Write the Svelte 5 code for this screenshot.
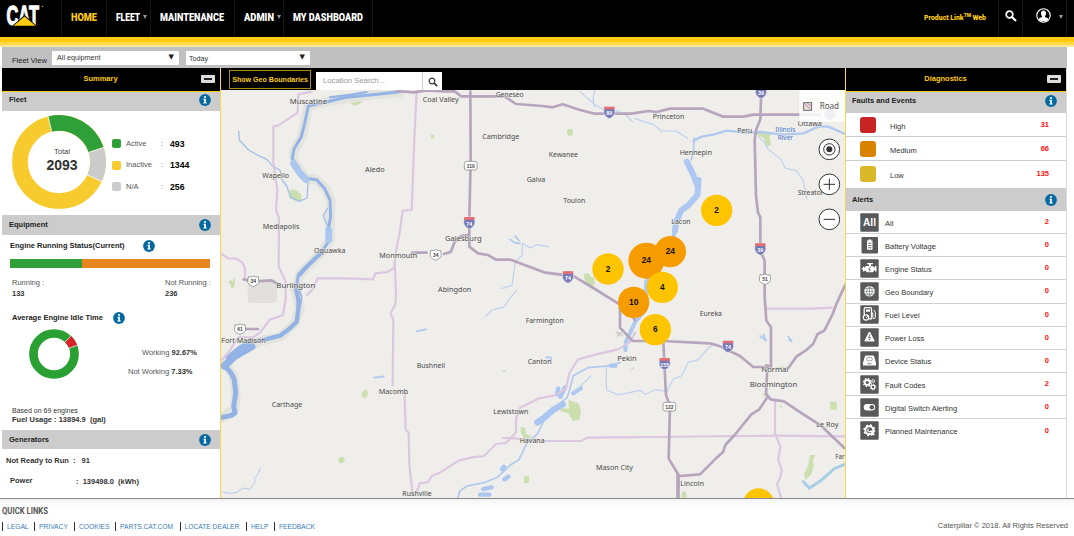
<script>
  const nav = [
    { t: 'HOME', w: 26, cell: 45, on: true },
    { t: 'FLEET', w: 24, cell: 44, menu: true },
    { t: 'MAINTENANCE', w: 64, cell: 83.5 },
    { t: 'ADMIN', w: 30, cell: 49.5, menu: true },
    { t: 'MY DASHBOARD', w: 70, cell: 90 }
  ];
  const fleet = [
    ['Active', '493', '#2f9f38'],
    ['Inactive', '1344', '#f7cb2d'],
    ['N/A', '256', '#cbcbcb']
  ];
  const faults = [
    ['High', '31', '#c92424'],
    ['Medium', '66', '#d98200'],
    ['Low', '135', '#dab726']
  ];
  const alerts = [
    ['All', '2', 'all'],
    ['Battery Voltage', '0', 'battery'],
    ['Engine Status', '0', 'engine'],
    ['Geo Boundary', '0', 'globe'],
    ['Fuel Level', '0', 'fuel'],
    ['Power Loss', '0', 'power'],
    ['Device Status', '0', 'device'],
    ['Fault Codes', '2', 'gears'],
    ['Digital Switch Alerting', '0', 'switch'],
    ['Planned Maintenance', '0', 'gear']
  ];
  const links = [
    ['LEGAL', 32], ['PRIVACY', 40], ['COOKIES', 41], ['PARTS.CAT.COM', 64.5],
    ['LOCATE DEALER', 66.5], ['HELP', 28], ['FEEDBACK', 50]
  ];
  // name, x, width, baseline in sheet units (three per pixel)
  const places = [
    ['Muscatine', 869, 112, 312], ['Coal Valley', 1268, 108, 305], ['Wapello', 787, 80, 534],
    ['Aledo', 1095, 59, 515], ['Mediapolis', 788, 110, 687], ['Oquawka', 942, 94, 759],
    ['Monmouth', 1138, 114, 773], ['Burlington', 829, 117, 863], ['Fort Madison', 664, 133, 1028],
    ['Carthage', 815, 92, 1220], ['Macomb', 1136, 89, 1182], ['Rushville', 1207, 88, 1489],
    ['Bushnell', 1250, 85, 1103], ['Geneseo', 1487, 84, 290], ['Cambridge', 1447, 111, 418],
    ['Kewanee', 1646, 88, 470], ['Galva', 1580, 56, 545], ['Toulon', 1690, 66, 608],
    ['Galesburg', 1335, 110, 722], ['Abingdon', 1314, 100, 875], ['Farmington', 1577, 114, 969],
    ['Canton', 1583, 72, 1093], ['Pekin', 1852, 58, 1084], ['Lewistown', 1480, 105, 1243],
    ['Havana', 1559, 75, 1328], ['Mason City', 1788, 111, 1411], ['Princeton', 1958, 95, 357],
    ['Peru', 2212, 45, 398], ['Ottawa', 2393, 72, 379], ['Hennepin', 2039, 97, 466],
    ['Streator', 2393, 78, 586], ['Lacon', 2014, 58, 672], ['Eureka', 2099, 67, 947],
    ['Normal', 2284, 81, 1116], ['Bloomington', 2249, 143, 1160], ['Le Roy', 2449, 66, 1280],
    ['Far', 2506, 28, 1377], ['Lincoln', 2041, 71, 1457]
  ];
  const interstates = [
    ['80', 1828, 337], ['74', 1408, 668], ['74', 1704, 831], ['39', 2283, 277],
    ['39', 2281, 747], ['74', 2184, 1039], ['155', 1994, 1091]
  ];
  const shields = [
    ['34', 760, 843, 34], ['61', 720, 987, 32], ['34', 1307, 764, 32], ['51', 2295, 837, 32],
    ['110', 1412, 497, 38], ['122', 2008, 1220, 38]
  ];
  const clusters = [
    ['2', 2150, 631, 47, '#ffc400'], ['24', 2011, 755, 47, '#f69b00'], ['24', 1939, 782, 54, '#f69b00'],
    ['2', 1824, 807, 47, '#ffc400'], ['4', 1987, 862, 47, '#ffc400'], ['10', 1901, 907, 47, '#f69b00'],
    ['6', 1966, 989, 47, '#ffc400'], ['', 2276, 1512, 47, '#ffc400']
  ];
</script>

{#snippet info()}
  <svg class="info" width="12" height="12" viewBox="0 0 12 12"><circle cx="6" cy="6" r="5.9" fill="#04699f" /><circle cx="6" cy="3" r="1.1" fill="#fff" /><path d="M4.4 4.8h2.5v3.7h.9v1H4.3v-1h.9V5.7h-.8z" fill="#fff" /></svg>
{/snippet}

{#snippet icon(k)}
  <svg class="icon" width="19" height="19" viewBox="0 0 19 19">
    <rect x={k === 'battery' ? 1.5 : 0.3} y={k === 'battery' ? 1 : 0.3} width={k === 'battery' ? 16.5 : 18.4} height={k === 'battery' ? 16.5 : 18.4} rx="1" fill="#58595b" />
    {#if k === 'all'}
      <text x="3" y="12.6" font-size="10.5" font-weight="bold" fill="#fff" textLength="13" lengthAdjust="spacingAndGlyphs">All</text>
    {:else if k === 'battery'}
      <path d="M8.5 3.6h2.6v1h1.4v9.2H7V4.600h1.500z" fill="#fff" /><path d="M8 7.200h3.500M8 9.500h3.500M8 11.800h3.500" stroke="#58595b" stroke-width=".8" />
    {:else if k === 'engine'}
      <path d="M7 4h6v1.300h-2V7h2l1 1.300h1V7h1.500v5.500H15v-1.300h-.8L13 13.200H7L5.500 11.800H4.200v.7H3v-2H1.800V9H3V7.700h1.200V9L6 7h3V5.300H7z" fill="#fff" /><path d="M10.500 7.500l-1.700 2.700h1.300l-.6 2.200" fill="none" stroke="#58595b" stroke-width=".8" />
    {:else if k === 'globe'}
      <circle cx="9.500" cy="9.300" r="5.300" fill="#fff" /><path d="M9.500 4v10.600M4.200 9.300h10.600M5.200 6.500h8.600M5.200 12.100h8.600M9.500 4c-3.700 3-3.700 7.600 0 10.600M9.500 4c3.700 3 3.700 7.600 0 10.600" fill="none" stroke="#77787a" stroke-width=".65" />
    {:else if k === 'fuel'}
      <path d="M4.200 10V4c0-1 .5-1.300 1.300-1.300h4.800c.8 0 1.200.5 1.200 1.300v9.800H9" fill="none" stroke="#fff" stroke-width="1.300" /><rect x="6" y="4.500" width="4" height="2.200" fill="#fff" /><path d="M11.800 8h1v4.500c0 1.500 2.500 1.500 2.500 0V7.200L13.700 4.800" fill="none" stroke="#fff" stroke-width="1" /><circle cx="6" cy="12.500" r="2.700" fill="#58595b" stroke="#fff" stroke-width="1.200" /><path d="M6 13l2-2" stroke="#fff" />
    {:else if k === 'power'}
      <path d="M9.500 3.900l4.700 9.100H4.800z" fill="#fff" stroke="#fff" stroke-linejoin="round" /><path d="M10.100 6.500L8.600 9.500h1.700l-.9 2.800" fill="none" stroke="#58595b" stroke-width=".9" />
    {:else if k === 'device'}
      <path d="M5.500 5h8l1.900 6.500H3.600z" fill="#fff" stroke="#fff" stroke-linejoin="round" /><rect x="3" y="11" width="13" height="3.500" fill="#fff" /><rect x="6.800" y="6.500" width="5.400" height="3.400" rx="1.500" fill="none" stroke="#77787a" stroke-width=".7" /><path d="M7.500 12.700h4" stroke="#58595b" stroke-width=".8" />
    {:else if k === 'gears'}
      <circle cx="7.300" cy="7.500" r="2.500" fill="none" stroke="#fff" stroke-width="1.900" /><circle cx="7.300" cy="7.500" r="3.900" fill="none" stroke="#fff" stroke-width="1.300" stroke-dasharray="1.500 1.560" /><circle cx="13" cy="12" r="1.900" fill="none" stroke="#fff" stroke-width="1.300" /><circle cx="13" cy="12" r="2.900" fill="none" stroke="#fff" stroke-dasharray="1.100 1.170" /><circle cx="13.200" cy="6" r="1.300" fill="none" stroke="#fff" stroke-width="1.200" stroke-dasharray="1 .5" />
    {:else if k === 'switch'}
      <rect x="3.700" y="6" width="11.500" height="6.400" rx="3.200" fill="#fff" /><circle cx="11.900" cy="9.200" r="2.200" fill="#58595b" />
    {:else}
      <circle cx="9.300" cy="9.300" r="4" fill="none" stroke="#fff" stroke-width="2" /><circle cx="9.300" cy="9.300" r="5.300" fill="none" stroke="#fff" stroke-width="1.400" stroke-dasharray="2.100 2.060" /><path d="M8.500 7.700a1.700 1.700 0 1 0 2.400 2.200L14.500 14" fill="none" stroke="#fff" stroke-width="1.200" />
    {/if}
  </svg>
{/snippet}

<div class="page">
  <header>
    <div class="logo">
      <svg width="42" height="30" viewBox="0 0 42 30">
        <text x=".5" y="22" font-size="28.500" font-weight="bold" fill="#fff" stroke="#fff" stroke-width="1.300" textLength="32.500" lengthAdjust="spacingAndGlyphs">CAT</text>
        <path d="M5 24L18.500 12L32 24z" fill="#000" /><path d="M7.500 22.700L18.500 13.600L29.500 22.700z" fill="#fecb12" />
        <circle cx="36.500" cy="3.500" r=".8" fill="#999" />
      </svg>
    </div>
    <nav>
      {#each nav as n}
        <div class="tab" style:width="{n.cell}px">
          <svg width={n.w} height="14" viewBox="0 0 {n.w} 14"><text y="11" font-family="Roboto" font-size="11" font-weight="900" fill={n.on ? '#fecb12' : '#fff'} textLength={n.w} lengthAdjust="spacingAndGlyphs">{n.t}</text></svg>
          {#if n.menu}<i class="caret"></i>{/if}
        </div>
      {/each}
    </nav>
    <div class="product">
      <svg width="62" height="14" viewBox="0 0 62 14"><text y="9.500" font-family="Roboto" font-weight="900" fill="#fecb12" font-size="7.700" textLength="62" lengthAdjust="spacingAndGlyphs">Product Link<tspan dy="-3" font-size="5.500">TM</tspan><tspan dx="1.500" dy="3">Web</tspan></text></svg>
    </div>
    <div class="tool search"><svg width="12" height="12" viewBox="0 0 12 12"><circle cx="4.500" cy="4.500" r="3.300" fill="none" stroke="#fff" stroke-width="1.700" /><path d="M7 7l4 4" stroke="#fff" stroke-width="2.100" /></svg></div>
    <div class="tool user">
      <svg width="15" height="15" viewBox="0 0 15 15"><circle cx="7.500" cy="7.500" r="6.700" fill="none" stroke="#fff" stroke-width="1.100" /><path d="M7.500 2.400c2 0 2.700 1.500 2.500 3.300-.1 1.200-.6 1.900-1 2.400v.8l3 1.300v1.500c-2.500 2-6.500 2-9 0v-1.500l3-1.300v-.8c-.4-.5-.9-1.200-1-2.400-.2-1.800.500-3.300 2.500-3.300z" fill="#fff" /></svg>
      <i class="caret"></i>
    </div>
  </header>
  <div class="stripe"></div>

  <div class="filters">
    <span>Fleet View</span>
    <div class="select a">All equipment<b>▼</b></div>
    <div class="select b">Today<b>▼</b></div>
  </div>

  <main>
    <aside class="left">
      <div class="title"><span>Summary</span><i class="min"></i></div>
      <h3 class="h-fleet">Fleet{@render info()}</h3>
      <div class="fleet">
        <svg width="94" height="94" viewBox="-47 -47 94 94">
          <g fill="none" stroke-width="15.700">
            <circle r="39" stroke="#f7cb2d" />
            <path d="M-9.100 -37.920A39 39 0 0 1 37.100 -12.050" stroke="#2f9f38" />
            <path d="M37.100 -12.050A39 39 0 0 1 35.500 16.150" stroke="#cbcbcb" />
          </g>
          <path d="M-7.300 -30.300L-11 -45.900M29.500 -9.600L44.900 -14.600M28.200 12.800L43 19.600" stroke="#fff" stroke-width=".8" />
          <text y="-8" font-size="7.500" text-anchor="middle" fill="#444" x="3">Total</text>
          <text y="8" x="3" font-size="14" font-weight="bold" text-anchor="middle" fill="#333">2093</text>
        </svg>
        <ul>
          {#each fleet as [n, v, c]}
            <li><i style:background={c}></i><span>{n}</span><em>:</em><b>{v}</b></li>
          {/each}
        </ul>
      </div>
      <h3 class="h-eq">Equipment{@render info()}</h3>
      <div class="equipment">
        <div class="sub">Engine Running Status(Current){@render info()}</div>
        <div class="bar"><i></i></div>
        <div class="pair"><div>Running :<b>133</b></div><div>Not Running :<b>236</b></div></div>
        <div class="sub idle">Average Engine Idle Time{@render info()}</div>
        <div class="work">
          <svg width="50" height="50" viewBox="-25 -25 50 50"><circle r="20.500" fill="none" stroke="#2a9f32" stroke-width="8.700" /><path d="M14 -15A20.500 20.500 0 0 1 19.200 -7.200" fill="none" stroke="#d8232a" stroke-width="8.700" /><path d="M11 -11.900L17.200 -18.500M14.600 -5.600L24 -9" stroke="#fff" stroke-width=".7" /></svg>
          <div><p>Working <b>92.67%</b></p><p>Not Working <b>7.33%</b></p></div>
        </div>
        <div class="usage">Based on 69 engines<b>Fuel Usage&nbsp;: 13894.9 &nbsp;(gal)</b></div>
      </div>
      <h3 class="h-gen">Generators{@render info()}</h3>
      <div class="gen"><p>Not Ready to Run &nbsp;:<b>91</b></p><p class="pow"><span>Power</span><b>: &nbsp;139498.0 &nbsp;(kWh)</b></p></div>
    </aside>

    <section class="center">
      <div class="mapbar"><button>Show Geo Boundaries</button><div class="loc">Location Search...<span><svg width="10" height="10" viewBox="0 0 10 10"><circle cx="4" cy="4" r="2.800" fill="none" stroke="#333" stroke-width="1.200" /><path d="M6 6l3.200 3.200" stroke="#333" stroke-width="1.700" /></svg></span></div></div>
      <svg class="map" width="624" height="408" viewBox="663 270 1872 1224">
        <rect x="663" y="270" width="1872" height="1224" fill="#efeeea" />
        <rect x="743" y="845" width="88" height="64" rx="12" fill="#e1e0dd" />
        <g fill="#cbdfae">
          <path d="M1051 295h30l6 12-20 10-14-6zM868 470l18 6 8 20 -4 18-16-18zM868 573l14-6 20 14 4 18-16 5-22-10zM970 561l18 4 2 14-12 2zM683 845l12-5 4 6 5-16 2 12-4 20-8 5 -3-14z" />
          <path d="M1292 405h10v10h-8zM1704 387h14v18l-12 4-6-10zM1087 1175l12-7 6 14-8 12-12-3zM1015 1374l14-4 6 10-8 10-10-2zM1750 824l14-6 8 12 12 4v20l-16 8-10-12zM1705 1200l30 10 8 22-4 26-20 6-14-24-24-6 4-10 22 2zM1562 1280l14 4 2 18 16 6-10 12-14-8-8-16zM1573 1429h14v20h-16zM1508 1110h8v6h-8zM1896 1104l8-4-4 8h-10z" />
          <path d="M2271 395h44l-6 16 4 24-14 4-8-26-20-8zM2490 1205h20v24h-18zM2430 1365h16l-8 20 4 10-8 28-18 16-4-18 12-22zM1956 867h6v8h-6zM2330 1100h24v8h-24zM2045 1478l12-6 4 22h-16zM2286 1180l10 2-2 10zM2338 1212l10 12-8-2z" />
        </g>
        <g fill="none" stroke-linejoin="round" stroke-linecap="round">
          <path d="M1200 278L1132 283 990 303 925 318 914 370 906 410 880 455 886 495 917 535 950 539 980 570 993 605 990 660 990 720 960 762 900 823 886 870 900 925 884 970 840 1011 790 1021 730 1046 673 1090 700 1125 708 1180 704 1225 663 1255" stroke="#e4e4df" stroke-width="29" />
          <g stroke="#93b3e6">
            <path d="M1200 275L1132 283 1040 292 990 303 925 318 914 370 904 410 882 447 877 475 890 500 917 535 950 539 974 566 990 600 992 650 986 680 989 720 960 762 925 795 894 830 888 870" stroke-width="9" />
            <path d="M1100 276l-50 8-60 8" stroke-width="6" />
            <path d="M881 490l20 31 18 18M986 690v30" stroke="#a9c7ef" stroke-width="20" />
            <path d="M960 762l-35 33-28 30" stroke-width="13" />
            <path d="M888 865l8 40-2 30-4 30-20 20-30 22-46 12-50 8-30 20-30 26" stroke-width="13" />
            <path d="M755 1040l-52 30-30 28" stroke-width="22" />
            <path d="M673 1095l20 24 10 20 4 40-6 40 4 20-12 8-32 6" stroke-width="15" />
            <path d="M895 860l10 30-6 40" stroke-width="5" />
            <path d="M924 550l-3 44-23 10-26-12-12-34-15-20-5-28-20-10-20-22-30-14-24-14-28-30-2-26M982 625l-12 22 16 40" stroke-width="4" stroke="#a3bfe9" />
            <path d="M668 1476l20 4 20-2 20-14 22 4 16-24-4-6 14-20 5-14" stroke="#b3cbee" stroke-width="3" />
          </g>
          <g stroke="#b0c9f0">
            <path d="M1122 1133l30-4M1250 994l28-6M1530 718l14 10 16 2M1545 708l12 14M2280 1008l18 14 -8-18M2365 1010l10 14-8-4M1638 1072h14l2 8" stroke-width="5" />
            <path d="M2535 402l-50-22-30 0-45 20-60 4-70-8-40 2-60-6-40 12-35 6-25 12" stroke-width="7" />
            <path d="M2083 415l-3 40-6 25" stroke-width="5" />
            <path d="M2060 485l18 36 16 40M2096 540l-4 45-26 30-22 16-16 36-3 26" stroke-width="18" stroke="#adc8f2" stroke-dasharray="60 2" />
            <path d="M2025 690l-14 65-32 30-40 60-3 85-30 35-28 60-2 25" stroke-width="12" />
            <path d="M1860 1088l-36 10-60 5-44 24-8 30-10 35-60 50-30 60-30 25-25 52-25 15-40 38-40 16-50 10-22 14-8 28" stroke-width="5" />
            <path d="M1688 1213l-30 18-28 24-18 12" stroke-width="19" stroke="#abc6f1" />
            <path d="M1675 1165l-4 18M1695 1162l-14 28M1720 1180l22-15M1832 1097h14M1506 1408l6-8M1525 1430l-12 8M1450 1467l25-5M1440 1484h28" stroke-width="13" stroke="#abc6f1" />
            <path d="M1905 355l26 10 30 8 22 20 45 0 35 22M2275 410l18 16 10 20 40 32 12 26 34 8 20 28 6 30 5 26M1905 1174l15-3 16 12 30-14 34 6 20-38 25-10 20-40 30-8 30-35 20-14M1820 1095l-2 40 2 35 34 14 24-4 27-6M1645 740l-35-6-20 10-22-14-2 36-20 20-10 70-32 10M1456 950l20-20 34-8 24-32 16-20M1740 275l46 40 28 15 34 2 28 10 22 24M1784 270l-5 26 4 24M1722 1178l50-50" stroke-width="3.500" stroke="#bdd1ee" />
            <path d="M2410 1445l18 20 38-26 38-34 31-12" stroke="#a9cfe6" stroke-width="9" />
          </g>
          <g stroke="#dcc7e0" stroke-width="6.500">
            <path d="M935 275l-40 8-2 55-58 38-15 4v110l12 80-4 60 9 25-1 145 21 45v50l-8 50-40 14-28 38-22 15h-44l-30 46-24 25M663 761l22 14 24 1 18 12 8 17 0 27M1250 275l-6 120-9 235-27 2-8 60-12 60-6 52-20 12-36 4-7 18-60-2-40-1-66 0-14 32-18 18" />
            <path d="M1184 785l4 100-2 27-14 28 8 20-2 196M1213 1170l4 120 9 8 2 95 10 90M1246 1485l14-35 24-4 12-18 20-8 60-38 40-10 36-4 36-36 30-3 30-32v-42l12-32 58-28 50-10 30-20 10-45 26-42 52-14 68-16 34-20 18-30" />
            <path d="M1508 1314l36 1 50 8h150l18-10 190-2 370-4 220 2M2296 926h140l60-3M2325 1200v100l16 40-6 40 10 30-4 22-10 20 12 42" />
          </g>
          <g stroke="#b6a5bd" stroke-width="8">
            <path d="M1190 273l50 4 40-6 50 3 34 0 20 15h130l34 23 80 6 30 4 30-9 50 16 46 12h110l51-8 25 3 40-10h100l60 24h60l30-6h200M1411 275l1 200-4 185v80l26 20 30 5 24 14h44l100 38 90 12 58 35 80 50 30 20M1860 923v60l38 40h90l142 7 30 9 60 29 40 33h46M1408 704l-24 4-20 18-12 30-20 6M1236 758h44M731 838l32 6 52-3 20 12M716 987h58" />
            <path d="M1860 925l35 22 10 14M2284 270l-3 88-12 30-5 30 4 170 6 50 7 14v100l13 30v110l5 70 14 20v118l-14-4M2302 1102l-4 80 14 16 40 6 50 34 60 38 71 68M2302 1192l-24 36-24 15-50 62-28 30-6 20-20 18-50 50-60 5-5-1v30M2365 1104l24-34 30-20 20-18 14-30 20-10 25-50 12-32 25-54M1990 1026l8 160 12 30-4 160 28 46" />
            <path d="M2034 1424v70" stroke-width="11" />
          </g>
        </g>
        <path d="M1844 990l14 8 10-6-4 10 8 8-14-4-6 8v-12z" fill="#cfccc6" />
        <g font-family="Noto Sans" font-size="23.500" fill="#4a4a4a" stroke="#efeeea" stroke-width="3" stroke-linejoin="round" paint-order="stroke">
          {#each places as [n, x, w, y]}
            <text {x} {y} textLength={w} lengthAdjust="spacingAndGlyphs">{n}</text>
          {/each}
          <g fill="#4574cd" font-size="20">
            <text x="2326" y="397" textLength="60" lengthAdjust="spacingAndGlyphs">Illinois</text>
            <text x="2333" y="421" textLength="46" lengthAdjust="spacingAndGlyphs">River</text>
          </g>
        </g>
        {#each interstates as [n, x, y]}
          <g transform="translate({x} {y})" font-size="16" font-weight="bold" text-anchor="middle">
            <path d="M-15-17H15L17 0Q15 13 0 19Q-15 13-17 0Z" fill="#7579b7" stroke="#efeeea" stroke-width="2" /><path d="M-15-17H15L16-9H-16Z" fill="#e86e71" /><text y="9" fill="#fff">{n}</text>
          </g>
        {/each}
        {#each shields as [n, x, y, w]}
          <g transform="translate({x} {y})" font-size="15" font-weight="bold" text-anchor="middle">
            {#if w > 35}<rect x={-w / 2} y="-13" width={w} height="26" rx="6" fill="#fff" stroke="#777" stroke-width="2" />
            {:else}<path d="M-15-13Q-8-10 0-15Q8-10 15-13L17 4Q15 11 0 17Q-15 11-17 4Z" fill="#fff" stroke="#777" stroke-width="2" />{/if}
            <text y="6" fill="#444">{n}</text>
          </g>
        {/each}
        {#each clusters as [n, x, y, r, c]}
          <circle cx={x} cy={y} {r} fill={c} />{#if n}<text {x} y={y + 8} font-size="25" font-weight="bold" text-anchor="middle" fill="#111">{n}</text>{/if}
        {/each}
        <rect x="2398" y="270" width="137" height="96" fill="#fff" opacity=".82" />
        <rect x="2411" y="308" width="24" height="23" fill="#e9dfd3" stroke="#555" stroke-width="2.500" /><path d="M2413 310l20 19M2422 310l11 7" stroke="#bd82c0" stroke-width="3" />
        <text x="2459" y="328" font-family="Noto Sans" font-size="26" fill="#555" textLength="58" lengthAdjust="spacingAndGlyphs">Road</text>
        <circle cx="2490" cy="343" r="16" fill="#e9e6f3" opacity=".6" />
        <g fill="#fff" stroke="#333" stroke-width="3"><circle cx="2488" cy="448" r="31" /><circle cx="2488" cy="553" r="31" /><circle cx="2488" cy="658" r="31" /><circle cx="2488" cy="448" r="17" /><path d="M2471 553h34M2488 536v34M2471 658h34" /></g>
        <circle cx="2488" cy="448" r="9" fill="#333" />
      </svg>
    </section>

    <aside class="right">
      <div class="title"><span>Diagnostics</span><i class="min"></i></div>
      <h3 class="h-faults">Faults and Events{@render info()}</h3>
      {#each faults as [n, v, c]}
        <div class="fault"><i style:background={c}></i><span>{n}</span><b>{v}</b></div>
      {/each}
      <h3 class="h-alerts">Alerts{@render info()}</h3>
      {#each alerts as [n, v, k]}
        <div class="alert">{@render icon(k)}<span>{n}</span><b>{v}</b></div>
      {/each}
    </aside>
  </main>

  <footer>
    <svg width="60" height="12" viewBox="0 0 60 12"><text y="9.500" font-family="Roboto" font-size="9.500" font-weight="bold" fill="#555" textLength="46" lengthAdjust="spacingAndGlyphs">QUICK LINKS</text></svg>
    <div class="foot">
      <div class="links">{#each links as [n, w]}<a href="#top" style:width="{w}px">{n}</a>{/each}</div>
      <span>Caterpillar © 2018. All Rights Reserved</span>
    </div>
  </footer>
</div>

<style>
  :global(body) { margin: 0; background: #fff; }
  .page { width: 1074px; height: 536px; overflow: hidden; font: 7.5px/10px "Liberation Sans", Arial, sans-serif; color: #333; box-sizing: border-box; }
  .page * { box-sizing: border-box; }
  p, ul, h3 { margin: 0; padding: 0; }
  svg { display: block; flex: none; overflow: visible; }
  .map { overflow: hidden; }
  header { height: 37px; background: #000; display: flex; padding-right: 7px; }
  .logo { width: 61px; padding: 3px 0 0 6px; }
  nav { display: flex; flex: 1; }
  .tab { height: 37px; border-left: 1px solid #161616; padding: 10px 0 0 9px; display: flex; gap: 3px; }
  .tab:last-child { border-right: 1px solid #161616; }
  .caret { width: 0; height: 0; border: 2px solid transparent; border-top: 4px solid #999; border-bottom: 0; margin-top: 5px; }
  .product { width: 74px; padding-top: 10px; }
  .tool { border-left: 1px solid #191919; height: 37px; display: flex; }
  .search { width: 24px; padding: 10px 0 0 6px; }
  .user { width: 45px; padding: 8px 0 0 13px; gap: 8px; border-right: 1px solid #191919; }
  .user .caret { margin-top: 7px; }
  .stripe { height: 10px; background: linear-gradient(#fecb12 0 5px, #ffd747 5px 8px, #ffe798 8px); }
  .filters { margin: 0 7px 0 2px; height: 21px; background: #c0c0c0; display: flex; align-items: flex-start; padding: 4px 0 0 10px; }
  .filters > span { width: 40px; padding-top: 5px; white-space: nowrap; color: #222; }
  .select { background: #fff; height: 14px; font-size: 7.200px; line-height: 13px; display: flex; justify-content: space-between; padding: 0 5px; }
  .select b { font-size: 7px; color: #222; font-family: "DejaVu Sans", sans-serif; }
  .a { width: 127px; }
  .b { width: 124px; margin-left: 7px; padding-left: 3px; line-height: 15px; }
  .b b { line-height: 13px; }
  main { margin: 0 7px 0 2px; height: 430px; display: grid; grid-template-columns: 219px 624px 222px; overflow: hidden; }
  .left { border-right: 1px solid #fbd54d; }
  .right { border-left: 1px solid #fbd54d; border-right: 1px solid #ddd; }
  .title { height: 23.500px; background: #000; color: #fecb12; font-weight: bold; border-bottom: 1.500px solid #fecb12; display: flex; align-items: center; justify-content: center; position: relative; }
  .title span { padding-right: 21px; }
  .min { position: absolute; right: 5px; top: 7px; width: 14px; height: 8px; border-radius: 1px; border: 3px solid #ddd; background: #222; }
  h3 { font-size: 7.500px; line-height: 18px; background: #ccc; padding: 0 9px 0 7px; display: flex; justify-content: space-between; align-items: center; color: #222; }
  .h-fleet { height: 19.500px; padding-bottom: 2px; }
  .h-eq { height: 20px; }
  .h-gen { height: 19px; }
  .fleet { height: 104px; display: flex; padding: 4px 0 0 10px; }
  .fleet svg { margin-right: 6px; }
  li { list-style: none; display: flex; height: 21.500px; align-items: center; color: #555; }
  ul { padding-top: 18px; }
  li i { width: 9px; height: 9px; border-radius: 2px; margin-right: 5px; }
  li span { width: 35px; }
  li em { font-style: normal; width: 9px; }
  li b { font-size: 8.700px; color: #000; }
  .equipment { height: 195px; padding: 5px 10px 0 8px; }
  .sub { display: flex; gap: 18px; align-items: center; font-weight: bold; color: #222; height: 12px; }
  .bar { height: 9px; margin-top: 7px; background: #e8861f; width: 200px; }
  .bar i { display: block; height: 9px; width: 72px; background: #2f9f38; }
  .pair { display: flex; justify-content: space-between; padding: 9px 0 0 2px; line-height: 11px; color: #555; }
  .pair b { display: block; color: #333; }
  .pair div:last-child { width: 45px; white-space: nowrap; }
  .idle { margin-top: 13px; padding-left: 2px; gap: 10px; }
  .work { display: flex; padding: 5px 0 0 19px; }
  .work div { padding: 15px 0 0 49px; width: 139px; color: #555; line-height: 18.700px; }
  .work p { white-space: nowrap; }
  .work p:first-child { padding-left: 14px; }
  .work b { color: #333; }
  .usage { padding: 25px 0 0 2px; font-size: 7px; line-height: 9px; }
  .usage b { display: block; font-size: 7.500px; line-height: 10px; }
  .gen { padding: 7px 0 0 4px; font-weight: bold; }
  .gen b { padding-left: 6px; }
  .pow { padding: 10px 0 0 4px; display: flex; }
  .pow span { width: 60px; }
  .pow b { padding-top: 1px; }
  .mapbar { height: 22px; background: #000; display: flex; padding: 2px 0 0 8px; gap: 5px; }
  button { width: 82px; height: 19px; background: #000; border: 1px solid #a88712; color: #fecb12; font: bold 7.100px "Liberation Sans", Arial, sans-serif; padding: 1px 0 0; white-space: nowrap; }
  .loc { width: 126px; height: 18px; margin-top: 1.500px; background: #fff; padding-left: 7px; line-height: 18px; color: #999; display: flex; justify-content: space-between; font-size: 7.700px; }
  .loc span { width: 20px; border-left: 1px solid #ccc; padding: 5px 0 0 5px; }
  .h-faults { height: 21.500px; padding: 0 9px 2px 6px; }
  .h-alerts { height: 23px; padding-left: 6px; }
  .fault { height: 24px; border-bottom: 1px solid #ccc; display: flex; align-items: center; padding: 1px 17px 0 14px; }
  .fault:nth-of-type(4) { height: 27px; padding-bottom: 2px; border: 0; }
  .fault i { width: 16px; height: 16px; border-radius: 3px; margin-right: 14px; }
  .fault span, .alert span { flex: 1; }
  .fault span { padding-top: 3px; }
  .fault b, .alert b { color: #f11; }
  .alert { height: 23.150px; border-bottom: 1px solid #d2d2d2; display: flex; align-items: center; padding: 0 17px 0 14px; }
  .alert:last-child { border: 0; }
  .alert span { padding: 3px 0 0 6px; }
  footer { border-top: 1px solid #888; height: 38px; padding: 5px 6px 0 2px; background: linear-gradient(#f3f3f3, #fff 8px); }
  .foot { display: flex; justify-content: space-between; align-items: center; margin-top: 5px; color: #555; }
  .links { display: flex; }
  a { color: #3a80b8; text-decoration: none; font-size: 6.700px; line-height: 9px; border-left: 1px solid #333; padding: 0 0 0 4px; height: 9px; white-space: nowrap; }
</style>
